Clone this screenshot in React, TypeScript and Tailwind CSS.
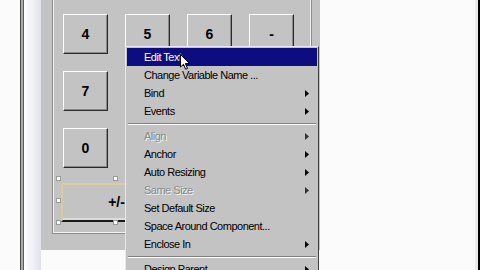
const digits = ["4", "5", "6", "-", "7", "", "", "", "0", "", "", ""];

type Item =
  | { sep: true }
  | { sep?: false; label: string; sub?: boolean; disabled?: boolean; active?: boolean };

const items: Item[] = [
  { label: "Edit Text", active: true },
  { label: "Change Variable Name ..." },
  { label: "Bind", sub: true },
  { label: "Events", sub: true },
  { sep: true },
  { label: "Align", sub: true, disabled: true },
  { label: "Anchor", sub: true },
  { label: "Auto Resizing", sub: true },
  { label: "Same Size", sub: true, disabled: true },
  { label: "Set Default Size" },
  { label: "Space Around Component..." },
  { label: "Enclose In", sub: true },
  { sep: true },
  { label: "Design Parent", sub: true },
];

const Handle = ({ x, y }: { x: string; y: string }) => (
  <div className={`absolute w-[5px] h-[5px] bg-white border border-[#9a9a9a] ${x} ${y}`} />
);

const CalcButton = ({ label }: { label: string }) => (
  <div className="flex items-center justify-center h-[40px] bg-[#c3c3c3] border border-t-white border-l-white border-r-[#2a2a2a] border-b-[#2a2a2a] shadow-[inset_-1px_-1px_0_#8a8a8a] text-[14px] font-bold text-black">
    {label}
  </div>
);

const Arrow = ({ color }: { color: string }) => (
  <svg width="4" height="7" viewBox="0 0 4 7" className="absolute right-[8px] top-[6px]">
    <path d="M0 0 L4 3.5 L0 7 Z" fill={color} />
  </svg>
);

const App = () => {
  return (
    <div className="relative w-[480px] h-[270px] flex bg-[#fbfbfb] overflow-hidden font-['Liberation_Sans',Arial,sans-serif]">
      <div className="w-[20px] shrink-0" />
      <div className="w-[1px] shrink-0 bg-[#4a4a4a]" />
      <div className="w-[2px] shrink-0 bg-[#ababab]" />
      <div className="w-[1px] shrink-0 bg-[#5c5c5c]" />
      <div className="w-[17px] shrink-0 bg-gradient-to-r from-white to-[#e2e2ee]" />

      {/* form panel */}
      <div className="w-[279px] h-[250px] shrink-0 bg-[#c3c3c3] pl-[11px] pr-[8px]">
        <div className="h-[234px] border-l border-r border-b border-[#8c8c8c]">
          <div className="h-full border-l border-r border-b border-[#f2f2f2] pt-[14px] pl-[9px]">
            <div className="grid grid-cols-[repeat(4,45px)] auto-rows-[40px] gap-x-[17px] gap-y-[17px]">
              {digits.map((d, i) =>
                d ? <CalcButton key={i} label={d} /> : <div key={i} />
              )}
            </div>

            {/* selected component */}
            <div className="relative ml-[-5px] mt-[10px] w-[114px] h-[45px]">
              <div className="absolute left-[3px] top-[5px] right-[2px] bottom-[1px] flex items-center justify-center border-t-2 border-l-2 border-b-2 border-t-[#d9cd9c] border-l-[#d9cd9c] border-b-[#1a1a1a] shadow-[inset_0_-6px_0_-4px_#dcdcdc] text-[14px] font-bold text-black">
                +/-
              </div>
              <Handle x="left-[-2px]" y="top-[-2px]" />
              <Handle x="left-[-2px]" y="top-[20px]" />
              <Handle x="left-[-2px]" y="bottom-[-2px]" />
              <Handle x="left-[55px]" y="top-[-2px]" />
              <Handle x="left-[55px]" y="bottom-[-2px]" />
            </div>
          </div>
        </div>
      </div>

      <div className="flex-1" />
      <div className="w-[3px] shrink-0 bg-[#ececec]" />
      <div className="w-[2px] shrink-0 bg-black" />

      {/* context menu */}
      <div className="absolute left-[125px] top-[46px] w-[194px] h-[240px] bg-[#c3c3c3] border border-t-[#e8e8e8] border-l-[#e8e8e8] border-r-[#404040] border-b-[#404040] p-[1px] text-[11px] tracking-[-0.5px]">
        {items.map((it, i) =>
          it.sep ? (
            <div key={i} className="h-[7px] flex flex-col justify-center px-[1px]">
              <div className="h-[1px] bg-[#808080]" />
              <div className="h-[1px] bg-white" />
            </div>
          ) : (
            <div
              key={i}
              className={`relative h-[18px] flex items-center pl-[17px] ${
                it.active ? "bg-[#0d0d80] text-white" : it.disabled ? "text-[#8a8a8a] [text-shadow:1px_1px_0_#f4f4f4]" : "text-black"
              }`}
            >
              {it.label}
              {it.sub && <Arrow color={it.disabled ? "#333" : "#000"} />}
            </div>
          )
        )}
      </div>

      {/* mouse cursor */}
      <svg width="11" height="17" viewBox="0 0 11 17" className="absolute left-[180px] top-[54px]">
        <path d="M0.5 0.5 L0.5 13 L3.5 10.3 L5.6 15.2 L7.5 14.4 L5.4 9.6 L9.5 9.6 Z" fill="white" stroke="black" strokeWidth="1" />
      </svg>
    </div>
  );
};

export default App;
